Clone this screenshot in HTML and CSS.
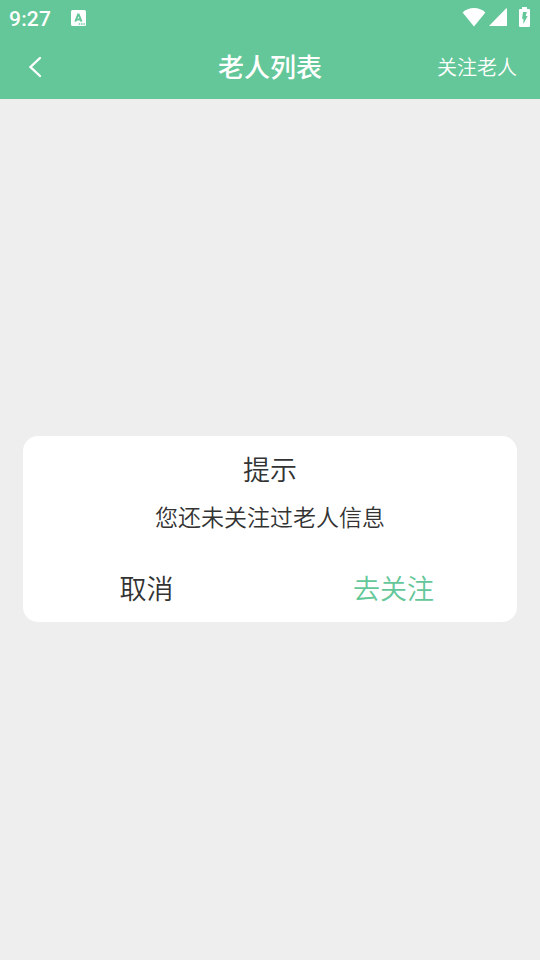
FILE: index.html
```html
<!DOCTYPE html>
<html lang="zh-CN">
<head>
    <meta charset="UTF-8">
    <meta name="viewport" content="width=device-width, initial-scale=1.0">
    <title>老人列表</title>
    <link rel="stylesheet" href="styles.css">
</head>

<body>
    <div class="status-bar">
        <span class="time">9:27</span>
        <svg class="app-icon" width="15" height="16" viewBox="0 0 15 16">
            <rect width="15" height="16" rx="1.5" fill="#fff"/>
            <path d="M4.3 11.6 L7.1 4.4 H7.7 L10.5 11.6 M5.4 9.5 H9.4" fill="none" stroke="#64c799" stroke-width="1.9"/>
            <path d="M7.8 14 H14" stroke="#64c799" stroke-width="1.3" stroke-dasharray="1.4 0.9"/>
        </svg>
        <div class="status-icons">
            <svg class="wifi" width="24" height="19" viewBox="0 0 24 19">
                <path d="M12 18.5 L0.6 4.6 C3.7 1.6 7.5 0 12 0 S20.3 1.6 23.4 4.6 Z" fill="#fff"/>
            </svg>
            <svg class="signal" width="18" height="18" viewBox="0 0 18 18">
                <path d="M0 18 L17 0.5 Q18 0 18 1 V18 Z" fill="#fff"/>
            </svg>
            <svg class="battery" width="11" height="20" viewBox="0 0 11 20">
                <path d="M3 0 H8 V2 H10 Q11 2 11 3 V19 Q11 20 10 20 H1 Q0 20 0 19 V3 Q0 2 1 2 H3 Z" fill="#fff"/>
                <path d="M4 5 H7.8 L6.7 9 H8.6 L4.4 17 V11.8 H3 Z" fill="#64c799"/>
            </svg>
        </div>
    </div>

    <div class="nav-bar">
        <button class="back-btn">
            <svg width="14" height="22" viewBox="0 0 14 22">
                <path d="M12 2 L2.5 11 L12 20" fill="none" stroke="#fff" stroke-width="2.4" stroke-linecap="round"/>
            </svg>
        </button>
        <div class="title">老人列表</div>
        <button class="follow-btn">关注老人</button>
    </div>

    <div class="content">
        <div class="dialog">
            <div class="dialog-title">提示</div>
            <div class="dialog-text">您还未关注过老人信息</div>
            <div class="dialog-footer">
                <button class="cancel-btn">取消</button>
                <button class="confirm-btn">去关注</button>
            </div>
        </div>
    </div>
</body>
</html>
```

FILE: styles.css
```css
body {
    margin: 0;
    height: 960px;
    display: flex;
    flex-direction: column;
    font-family: "Noto Sans CJK SC", sans-serif;
    font-weight: 350;
    background-color: #eeeeee;
    color: #333333;
}

button {
    padding: 0;
    border: none;
    background: none;
    font-family: inherit;
    font-weight: inherit;
    color: inherit;
    cursor: pointer;
}

svg {
    display: block;
}

.status-bar {
    height: 36px;
    display: flex;
    align-items: center;
    padding: 0 10px 0 9px;
    background-color: #64c799;
    color: #ffffff;
}

.time {
    width: 62px;
    font-family: Roboto, sans-serif;
    font-size: 21px;
    font-weight: 500;
    line-height: 24px;
    padding-top: 2px;
    letter-spacing: 0.2px;
}

.status-icons {
    display: flex;
    align-items: center;
    margin-left: auto;
    margin-top: -2px;
}

.signal {
    margin-left: 3px;
}

.battery {
    margin-left: 12px;
}

.nav-bar {
    height: 63px;
    box-sizing: border-box;
    display: grid;
    grid-template-columns: 1fr auto 1fr;
    align-items: center;
    padding: 0 23px 2px;
    background-color: #64c799;
    color: #ffffff;
}

.back-btn {
    justify-self: start;
    margin-left: 5px;
}

.title {
    font-size: 26px;
    font-weight: 500;
    line-height: 38px;
    padding-bottom: 2px;
}

.follow-btn {
    justify-self: end;
    font-size: 20px;
}

.content {
    flex: 1;
    display: flex;
    flex-direction: column;
    align-items: center;
}

.dialog {
    width: 494px;
    height: 186px;
    margin-top: 337px;
    border-radius: 15px;
    background-color: #ffffff;
    text-align: center;
}

.dialog-title {
    padding-top: 13px;
    font-size: 27px;
    line-height: 40px;
}

.dialog-text {
    margin-top: 10px;
    font-size: 23px;
    line-height: 34px;
}

.dialog-footer {
    display: grid;
    grid-template-columns: 1fr 1fr;
    margin-top: 35px;
}

.dialog-footer button {
    font-size: 27px;
    line-height: 40px;
}

.confirm-btn {
    color: #64c799;
}
```
